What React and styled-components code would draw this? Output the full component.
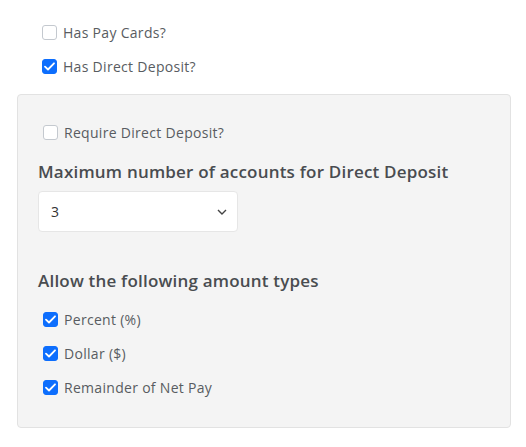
import styled, { createGlobalStyle } from "styled-components";

const GlobalStyle = createGlobalStyle`
  body {
    margin: 0;
    background: #ffffff;
    font-family: "Open Sans", "Liberation Sans", sans-serif;
  }
`;

const Page = styled.div`
  width: 526px;
  padding: 25px 15px 20px 17px;
  box-sizing: border-box;
`;

const TopList = styled.div`
  display: flex;
  flex-direction: column;
  gap: 19px;
  padding-left: 25px;
  margin-bottom: 20px;
`;

const Row = styled.label`
  display: flex;
  align-items: center;
  gap: 6px;
  height: 15px;
  font-size: 14px;
  color: #585c61;
  letter-spacing: 0.3px;
`;

const Box = styled.span`
  width: 15px;
  height: 15px;
  box-sizing: border-box;
  border-radius: 3px;
  flex: none;
  display: flex;
  align-items: center;
  justify-content: center;
  background: ${(p) => (p.$checked ? "#0d6efd" : "#ffffff")};
  border: 1px solid ${(p) => (p.$checked ? "#0d6efd" : "#c4c9cf")};
`;

const Panel = styled.div`
  background: #f4f4f4;
  border: 1px solid #e2e2e2;
  border-radius: 4px;
  padding: 30px 20px 32px 20px;
`;

const PanelCheck = styled.div`
  padding-left: 5px;
`;

const Heading = styled.h3`
  margin: 0;
  font-size: 17px;
  font-weight: 600;
  color: #494c50;
  letter-spacing: 0.2px;
  line-height: 20px;
`;

const Select = styled.div`
  width: 200px;
  height: 41px;
  box-sizing: border-box;
  background: #ffffff;
  border: 1px solid #e6e6e6;
  border-radius: 4px;
  display: flex;
  align-items: center;
  justify-content: space-between;
  padding: 0 10px 0 12px;
  font-size: 14px;
  color: #333;
`;

const TypeList = styled.div`
  display: flex;
  flex-direction: column;
  gap: 19px;
  padding-left: 5px;
`;

const Section = styled.div`
  display: flex;
  flex-direction: column;
  margin-top: ${(p) => p.$top}px;
  gap: ${(p) => p.$gap}px;
`;

const Check = ({ checked }) => (
  <Box $checked={checked}>
    {checked && (
      <svg width="11" height="9" viewBox="0 0 11 9">
        <path d="M1 4.6 L4 7.5 L10 1.3" fill="none" stroke="#fff" strokeWidth="1.8" strokeLinecap="round" strokeLinejoin="round" />
      </svg>
    )}
  </Box>
);

const CheckRow = ({ checked, children }) => (
  <Row>
    <Check checked={checked} />
    {children}
  </Row>
);

const App = () => {
  return (
    <Page>
      <GlobalStyle />
      <TopList>
        <CheckRow>Has Pay Cards?</CheckRow>
        <CheckRow checked>Has Direct Deposit?</CheckRow>
      </TopList>
      <Panel>
        <PanelCheck>
          <CheckRow>Require Direct Deposit?</CheckRow>
        </PanelCheck>
        <Section $top={22} $gap={9}>
          <Heading>Maximum number of accounts for Direct Deposit</Heading>
          <Select>
            <span>3</span>
            <svg width="10" height="6" viewBox="0 0 10 6">
              <path d="M1 1 L5 5 L9 1" fill="none" stroke="#444" strokeWidth="1.4" />
            </svg>
          </Select>
        </Section>
        <Section $top={39} $gap={21}>
          <Heading>Allow the following amount types</Heading>
          <TypeList>
            <CheckRow checked>Percent (%)</CheckRow>
            <CheckRow checked>Dollar ($)</CheckRow>
            <CheckRow checked>Remainder of Net Pay</CheckRow>
          </TypeList>
        </Section>
      </Panel>
    </Page>
  );
};

export default App;
